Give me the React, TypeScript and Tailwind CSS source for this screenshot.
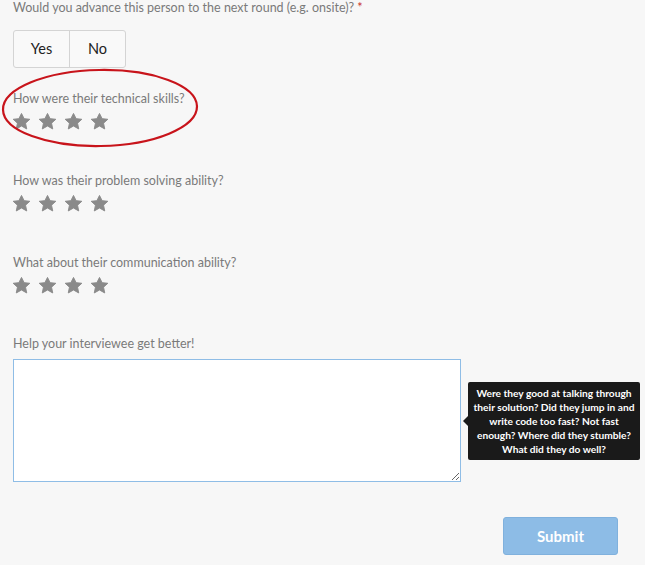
const QUESTIONS = [
  "How were their technical skills?",
  "How was their problem solving ability?",
  "What about their communication ability?",
];

function Star() {
  return (
    <svg viewBox="0 0 24 24" className="h-[19px] w-[19px] fill-[#8a8a8a] stroke-[#8a8a8a]">
      <path
        strokeWidth="1.2"
        strokeLinejoin="round"
        d="M12 1.8l3.3 6.6 7.2.8-5.4 4.9 1.5 7.3L12 17.7l-6.6 3.7 1.5-7.3-5.4-4.9 7.2-.8z"
      />
    </svg>
  );
}

function Stars() {
  return (
    <div className="flex gap-[7px] -ml-[1px]">
      {[0, 1, 2, 3].map((i) => (
        <Star key={i} />
      ))}
    </div>
  );
}

export default function App() {
  return (
    <div
      className="relative h-[565px] w-[645px] overflow-hidden bg-[#f7f7f7] pl-[13px]"
      style={{ fontFamily: "Lato, 'Open Sans', sans-serif" }}
    >
      {/* advance question */}
      <p className="text-[12.5px] leading-4 text-[#7a7a7a]">
        Would you advance this person to the next round (e.g. onsite)?{" "}
        <span className="text-[#c9302c]">*</span>
      </p>
      <div className="mt-[14px] flex h-[38px] w-[113px] rounded-[3px] border border-[#d4d4d4] bg-[#f9f9f9] text-[14.5px] text-[#222]">
        <button className="flex-1 border-r border-[#d4d4d4]">Yes</button>
        <button className="flex-1">No</button>
      </div>

      {/* ratings */}
      <div className="mt-[23px] flex flex-col gap-[42px]">
        {QUESTIONS.map((q) => (
          <div key={q} className="flex flex-col gap-[5px]">
            <p className="text-[12.5px] leading-4 text-[#7a7a7a]">{q}</p>
            <Stars />
          </div>
        ))}
      </div>

      {/* feedback */}
      <p className="mt-[41px] text-[12.5px] leading-4 text-[#7a7a7a]">
        Help your interviewee get better!
      </p>
      <div className="mt-[7px] flex items-center">
        <textarea className="h-[123px] w-[448px] resize-y border border-[#8fbde6] bg-white outline-none" />
        <div className="ml-[2px] flex items-center">
          <div className="h-0 w-0 border-y-[5px] border-r-[5px] border-y-transparent border-r-[#1a1a1a]" />
          <div className="w-[172px] rounded-[2px] bg-[#1a1a1a] px-[2px] py-[4px] text-center text-[10.2px] leading-[14px] font-bold text-white">
            Were they good at talking through their solution? Did they jump in and write code too fast? Not fast enough? Where did they stumble? What did they do well?
          </div>
        </div>
      </div>

      <div className="mt-[35px] pl-[490px]">
        <button className="h-[38px] w-[115px] rounded-[3px] border border-[#80b1dd] bg-[#8dbce6] text-[15px] font-bold text-white">
          Submit
        </button>
      </div>

      {/* red annotation ellipse */}
      <svg className="absolute left-0 top-[66px]" width="202" height="84" viewBox="0 0 202 84">
        <ellipse cx="100" cy="42" rx="97" ry="38" fill="none" stroke="#c8141b" strokeWidth="2.2" transform="rotate(-1 100 42)" />
      </svg>
    </div>
  );
}
